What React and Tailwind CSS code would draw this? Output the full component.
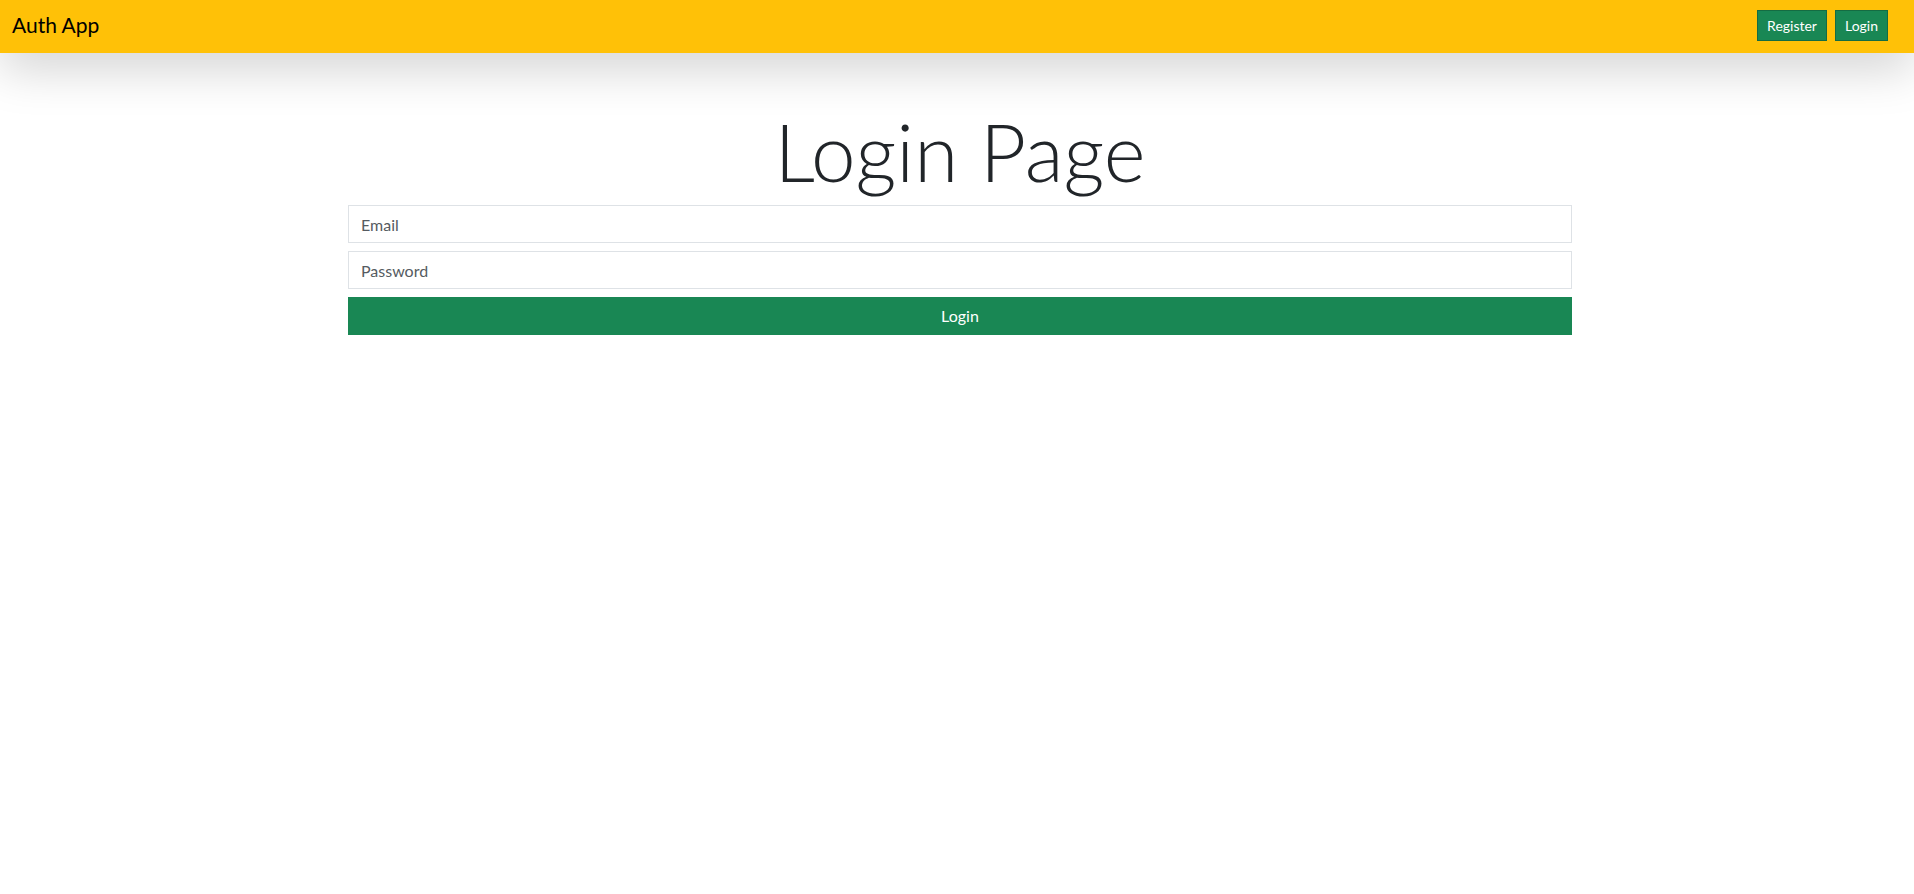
export default function App() {
  return (
    <div className="min-h-screen bg-white font-['Lato',_'Liberation_Sans',_sans-serif] text-[#212529]">
      <nav className="relative z-10 flex h-[53px] items-center justify-between bg-[#ffc107] pb-[3px] pl-3 pr-[26px] shadow-[0_16px_48px_rgba(0,0,0,0.175)]">
        <span className="text-[21px] leading-[30px] text-black">Auth App</span>
        <div className="flex items-center gap-2">
          <button className="h-[31px] border border-[#146c43] bg-[#198754] px-[9px] text-[14px] text-white">
            Register
          </button>
          <button className="h-[31px] border border-[#146c43] bg-[#198754] px-[9px] text-[14px] text-white">
            Login
          </button>
        </div>
      </nav>

      <main className="ml-[348px] w-[1224px] pt-[50px]">
        <h1 className="mb-[6px] text-center text-[80px] font-light leading-[96px]">Login Page</h1>
        <form className="flex flex-col gap-2" onSubmit={(e) => e.preventDefault()}>
          <input
            type="email"
            placeholder="Email"
            className="h-[38px] border border-[#dee2e6] px-3 text-[16px] outline-none placeholder:text-[#555b61]"
          />
          <input
            type="password"
            placeholder="Password"
            className="h-[38px] border border-[#dee2e6] px-3 text-[16px] outline-none placeholder:text-[#555b61]"
          />
          <button type="submit" className="h-[38px] bg-[#198754] text-[16px] text-white">
            Login
          </button>
        </form>
      </main>
    </div>
  )
}
